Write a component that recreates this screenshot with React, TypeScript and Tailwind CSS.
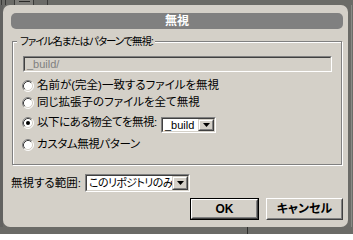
import React from "react";

const Radio = ({ checked = false }: { checked?: boolean }) => (
  <svg width="12" height="12" viewBox="0 0 12 12" className="shrink-0">
    <circle cx="6" cy="6" r="5" fill="#fff" />
    <path d="M2.11 9.89 A5.5 5.5 0 0 1 9.89 2.11" stroke="#808080" fill="none" />
    <path d="M9.89 2.11 A5.5 5.5 0 0 1 2.11 9.89" stroke="#ffffff" fill="none" />
    <path d="M2.82 9.18 A4.5 4.5 0 0 1 9.18 2.82" stroke="#404040" fill="none" />
    <path d="M9.18 2.82 A4.5 4.5 0 0 1 2.82 9.18" stroke="#d4d0c8" fill="none" />
    {checked && <circle cx="6" cy="6" r="2" fill="#000" />}
  </svg>
);

const Sunken = ({ className, children }: { className: string; children: React.ReactNode }) => (
  <div className={`border border-t-[#808080] border-l-[#808080] border-b-white border-r-white ${className}`}>
    <div className="w-full h-full border border-t-[#404040] border-l-[#404040] border-b-[#d4d0c8] border-r-[#d4d0c8] flex items-center">
      {children}
    </div>
  </div>
);

const DropButton = () => (
  <div className="h-full w-[16px] shrink-0 border border-t-[#d4d0c8] border-l-[#d4d0c8] border-b-[#404040] border-r-[#404040] bg-[#d4d0c8]">
    <div className="w-full h-full border border-t-white border-l-white border-b-[#808080] border-r-[#808080] flex items-center justify-center">
      <svg width="7" height="4" viewBox="0 0 7 4">
        <path d="M0 0 H7 L3.5 4 Z" fill="#000" />
      </svg>
    </div>
  </div>
);

const RadioRow = ({ label, checked, className = "" }: { label: string; checked?: boolean; className?: string }) => (
  <div className="h-[17px] flex items-center gap-[3px]">
    <Radio checked={checked} />
    <span className={className}>{label}</span>
  </div>
);

export default function App() {
  return (
    <div className="w-[353px] h-[234px] overflow-hidden bg-[#6b6b67] flex flex-col text-[11.5px] leading-[13px] whitespace-nowrap text-black font-['Liberation_Sans','Noto_Sans_CJK_JP',sans-serif] [font-feature-settings:'palt']">
      {/* window behind, top edge */}
      <div className="h-[5px] shrink-0 flex">
        <div className="ml-[1px] w-px bg-[#3a3a38]" />
        <div className="ml-[3px] w-px bg-[#3a3a38]" />
        <div className="ml-[8px] w-[20px] bg-[#7e7d79] border-x border-[#3a3a38] flex justify-center">
          <div className="mt-px w-[11px] h-px bg-[#2a2a28]" />
        </div>
        <div className="ml-[13px] w-px bg-[#3a3a38]" />
      </div>

      <div className="flex h-[222px] shrink-0">
        <div className="w-[3px] bg-[#626260]" />
        <div className="w-[345px] bg-[#d4d0c8] rounded-[7px] flex flex-col pl-[8px] pr-[5px] pt-[8px] pb-[7px]">
          <div className="h-[16px] rounded-[5px] bg-[#808080] flex items-center justify-center text-white font-bold text-[12px]">
            無視
          </div>

          <div className="relative mt-[12px] mx-px h-[124px] border border-[#808080] shadow-[1px_1px_0_#fff,inset_1px_1px_0_#fff] pl-[9px] pr-[9px] pt-[14px] pb-[11px] flex flex-col">
            <span className="absolute left-[4px] top-[-7px] pl-[3px] pr-[2px] bg-[#d4d0c8] text-[10.5px] tracking-[-1px]">
              ファイル名またはパターンで無視:
            </span>
            <Sunken className="ml-px w-[309px] h-[16px] shrink-0">
              <span className="pl-[2px] leading-[12px] text-[11px] text-[#808080]">_build/</span>
            </Sunken>
            <div className="mt-[5px]">
              <RadioRow label="名前が(完全)一致するファイルを無視" />
              <RadioRow label="同じ拡張子のファイルを全て無視" />
              <div className="mt-px h-[21px] flex items-start">
                <div className="mt-[2px] h-[17px] w-[135px] shrink-0 flex items-center gap-[3px]">
                  <Radio checked />
                  <span className="tracking-[-0.5px]">以下にある物全てを無視:</span>
                </div>
                <Sunken className="ml-[4px] mt-[5px] w-[55px] h-[16px] bg-white">
                  <span className="pl-[2px] flex-1 min-w-0 leading-[12px] text-[11px]">_build</span>
                  <DropButton />
                </Sunken>
              </div>
              <div className="mt-[3px]">
                <RadioRow label="カスタム無視パターン" className="tracking-[-0.4px]" />
              </div>
            </div>
          </div>

          <div className="mt-[9px] h-[18px] flex items-center">
            <span className="w-[71px] shrink-0">無視する範囲:</span>
            <Sunken className="ml-[3px] w-[105px] h-[18px] bg-white">
              <span className="pl-[2px] flex-1 min-w-0 text-[11px] tracking-[-0.6px]">このリポジトリのみ</span>
              <DropButton />
            </Sunken>
          </div>

          <div className="mt-[6px] flex justify-end gap-[7px]">
            <div className="w-[69px] h-[22px] border border-black">
              <div className="w-full h-full border border-t-white border-l-white border-b-[#404040] border-r-[#404040]">
                <div className="w-full h-full border border-t-[#d4d0c8] border-l-[#d4d0c8] border-b-[#808080] border-r-[#808080] flex items-center justify-center font-bold text-[12px]">
                  OK
                </div>
              </div>
            </div>
            <div className="w-[77px] h-[22px] border border-t-white border-l-white border-b-[#404040] border-r-[#404040]">
              <div className="w-full h-full border border-t-[#d4d0c8] border-l-[#d4d0c8] border-b-[#808080] border-r-[#808080] flex items-center justify-center font-bold text-[12px]">
                キャンセル
              </div>
            </div>
          </div>
        </div>
        <div className="w-[5px] flex">
          <div className="ml-[3px] w-px bg-[#8a8a86]" />
        </div>
      </div>

      <div className="flex-1 flex">
        <div className="ml-[247px] w-px bg-[#2f2f2d]" />
      </div>
    </div>
  );
}
